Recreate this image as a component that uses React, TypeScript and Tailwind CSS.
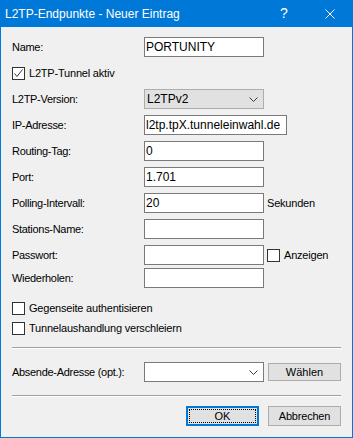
import type { ReactNode } from "react";

const font = "font-['Liberation_Sans',Arial,sans-serif]";

function Chevron() {
  return (
    <svg width="9" height="5" viewBox="0 0 9 5" className="ml-auto mr-[5px]">
      <polyline points="0.5,0.5 4.5,4.5 8.5,0.5" fill="none" stroke="#3c3c3c" strokeWidth="1" />
    </svg>
  );
}

function CheckBox({ checked = false }: { checked?: boolean }) {
  return (
    <div className="w-[13px] h-[13px] border border-[#333333] bg-white shrink-0 flex items-center justify-center">
      {checked && (
        <svg width="11" height="11" viewBox="0 0 11 11">
          <polyline points="1.5,5.5 4,8.5 9.5,1.5" fill="none" stroke="#333333" strokeWidth="1" />
        </svg>
      )}
    </div>
  );
}

function CheckRow({ label, checked, className = "" }: { label: string; checked?: boolean; className?: string }) {
  return (
    <div className={`flex items-center gap-[4px] pl-[11px] h-[13px] ${className}`}>
      <CheckBox checked={checked} />
      <span className="text-[11px] tracking-[-0.2px] leading-none">{label}</span>
    </div>
  );
}

interface FieldProps {
  label: string;
  value?: string;
  wide?: boolean;
  className?: string;
  after?: ReactNode;
}

function Field({ label, value = "", wide = false, className = "", after }: FieldProps) {
  return (
    <div className={`flex items-center h-[20px] ${className}`}>
      <div className="w-[143px] pl-[11px] text-[11px] tracking-[-0.3px]">{label}</div>
      <div
        className={`${wide ? "w-[143px]" : "w-[120px]"} h-[20px] border border-[#7a7a7a] bg-white pl-[1px] flex items-center text-[12px] whitespace-nowrap overflow-hidden`}
      >
        {value}
      </div>
      {after}
    </div>
  );
}

function Separator({ className = "" }: { className?: string }) {
  return <div className={`mx-[11px] border-t border-[#a0a0a0] border-b border-b-white ${className}`} />;
}

export default function App() {
  return (
    <div className={`w-[353px] h-[438px] bg-[#0078d7] flex flex-col text-black ${font}`}>
      <div className="h-[27px] flex items-center text-white shrink-0">
        <span className="pl-[5px] text-[12px]">L2TP-Endpunkte - Neuer Eintrag</span>
        <div className="ml-auto w-[46px] h-full flex items-center justify-center text-[14px]">?</div>
        <div className="w-[46px] h-full flex items-center justify-center">
          <svg width="10" height="10" viewBox="0 0 10 10">
            <path d="M0.5 0.5 L9.5 9.5 M9.5 0.5 L0.5 9.5" stroke="white" strokeWidth="1" />
          </svg>
        </div>
      </div>

      <div className="flex-1 mx-[1px] mb-[1px] bg-[#f0f0f0] flex flex-col">
        <Field label="Name:" value="PORTUNITY" className="mt-[10px]" />
        <CheckRow label="L2TP-Tunnel aktiv" checked className="mt-[10px]" />

        <div className="flex items-center h-[20px] mt-[9px]">
          <div className="w-[143px] pl-[11px] text-[11px] tracking-[-0.3px]">L2TP-Version:</div>
          <div className="w-[120px] h-[20px] border border-[#adadad] bg-[#e1e1e1] pl-[2px] flex items-center text-[12px]">
            L2TPv2
            <Chevron />
          </div>
        </div>

        <Field label="IP-Adresse:" value="l2tp.tpX.tunneleinwahl.de" wide className="mt-[6px]" />
        <Field label="Routing-Tag:" value="0" className="mt-[6px]" />
        <Field label="Port:" value="1.701" className="mt-[6px]" />
        <Field
          label="Polling-Intervall:"
          value="20"
          className="mt-[6px]"
          after={<span className="ml-[3px] text-[11px] tracking-[-0.2px]">Sekunden</span>}
        />
        <Field label="Stations-Name:" className="mt-[6px]" />
        <Field
          label="Passwort:"
          className="mt-[6px]"
          after={
            <div className="ml-[3px] flex items-center gap-[4px]">
              <CheckBox />
              <span className="text-[11px] tracking-[-0.2px]">Anzeigen</span>
            </div>
          }
        />
        <Field label="Wiederholen:" className="mt-[3px]" />

        <CheckRow label="Gegenseite authentisieren" className="mt-[14px]" />
        <CheckRow label="Tunnelaushandlung verschleiern" className="mt-[7px]" />

        <Separator className="mt-[12px]" />

        <div className="flex items-start mt-[13px]">
          <div className="w-[143px] pl-[11px] h-[20px] flex items-center text-[11px] tracking-[-0.3px]">
            Absende-Adresse (opt.):
          </div>
          <div className="w-[120px] h-[20px] border border-[#7a7a7a] bg-white flex items-center">
            <Chevron />
          </div>
          <button className="ml-[4px] mt-[1px] w-[73px] h-[18px] border border-[#adadad] bg-[#e1e1e1] text-[11px] leading-none flex items-center justify-center">
            Wählen
          </button>
        </div>

        <Separator className="mt-[13px]" />

        <div className="flex justify-end gap-[9px] pr-[11px] mt-[9px]">
          <button className="w-[73px] h-[20px] border-2 border-[#0078d7] bg-[#e1e1e1] p-[1px]">
            <div className="w-full h-full border border-dotted border-black flex items-center justify-center text-[11px] leading-none">
              OK
            </div>
          </button>
          <button className="w-[73px] h-[20px] border border-[#adadad] bg-[#e1e1e1] text-[11px] tracking-[-0.2px] leading-none flex items-center justify-center">
            Abbrechen
          </button>
        </div>
      </div>
    </div>
  );
}
